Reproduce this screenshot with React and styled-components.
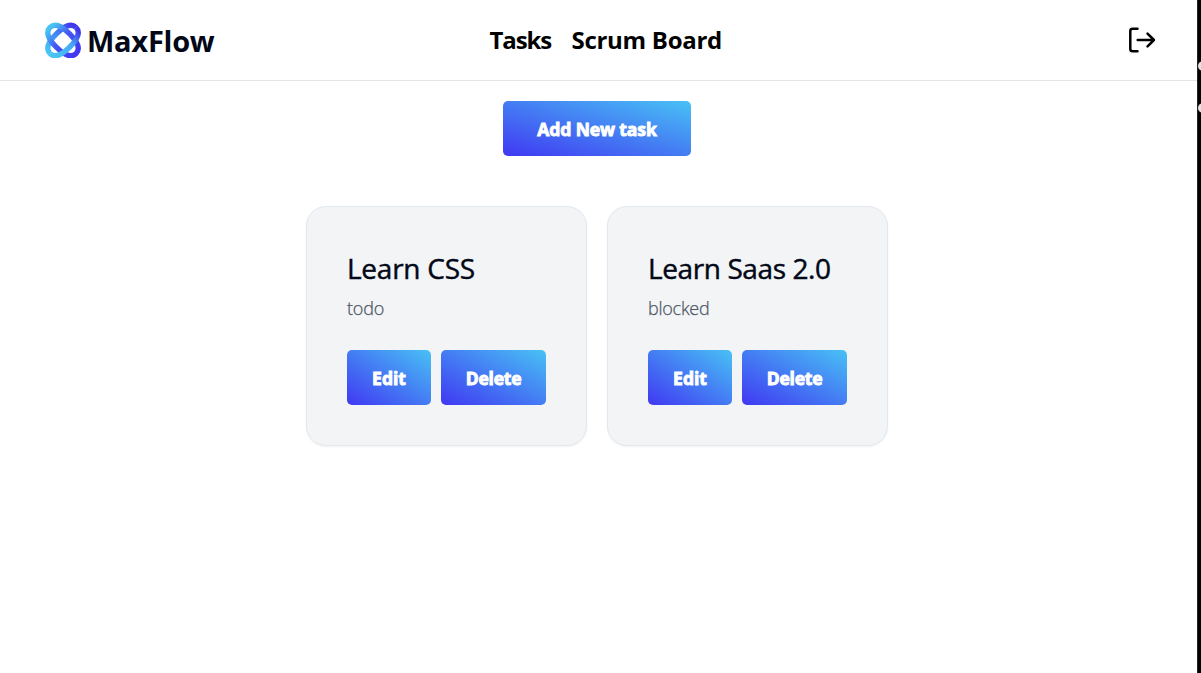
import React from "react";
import styled, { createGlobalStyle } from "styled-components";

const GlobalStyle = createGlobalStyle`
  * { box-sizing: border-box; }
  body { margin: 0; background: #fff; overflow: hidden; }
  h1, h2, p { margin: 0; font-weight: inherit; }
  button { border: 0; padding: 0; font: inherit; background: none; color: inherit; }
`;

const Page = styled.div`
  display: flex;
  height: 673px;
  font-family: "Segoe UI", "Open Sans", "Noto Sans", sans-serif;
  color: #020817;
`;

const Content = styled.div`
  flex: 1;
  display: flex;
  flex-direction: column;
`;

const Edge = styled.aside`
  flex: none;
  width: 4px;
  background: #000;
  border-left: 1px solid #222;
  overflow: hidden;
  display: flex;
  flex-direction: column;
  gap: 32px;
  padding-top: 61px;
`;

const EdgeDot = styled.span`
  flex: none;
  width: 10px;
  height: 10px;
  border-radius: 50%;
  background: #e4e4e4;
`;

const Header = styled.header`
  height: 81px;
  border-bottom: 1px solid #e5e5e5;
  display: grid;
  grid-template-columns: 1fr auto 1fr;
  align-items: center;
  padding: 0 41px 0 45px;
`;

const Brand = styled.div`
  display: flex;
  align-items: center;
  gap: 6px;
`;

const BrandName = styled.h1`
  font-size: 29px;
  line-height: 40px;
  font-weight: 700;
  letter-spacing: -0.25px;
  padding-top: 1px;
`;

const Nav = styled.nav`
  display: flex;
  gap: 20px;
  margin-left: 11px;
`;

const NavLink = styled.a`
  font-size: 24px;
  line-height: 36px;
  font-weight: 700;
  width: ${(p) => p.$width}px;
  letter-spacing: ${(p) => p.$spacing}px;
  color: #000;
  white-space: nowrap;
`;

const LogoutButton = styled.button`
  justify-self: end;
  display: flex;
`;

const Main = styled.main`
  display: flex;
  flex-direction: column;
  align-items: center;
  gap: 50px;
  padding: 20px 3px 0 0;
`;

const GradientButton = styled.button`
  width: ${(p) => p.$width}px;
  height: 55px;
  border-radius: 5px;
  background: linear-gradient(to top right, #4038f2, #48c1f5);
  color: #fff;
  font-size: 17.5px;
  font-weight: 700;
  letter-spacing: ${(p) => p.$spacing}px;
  -webkit-text-stroke: 0.9px currentColor;
  line-height: 55px;
  padding-top: 2px;
  white-space: nowrap;
  display: flex;
  align-items: center;
  justify-content: center;
`;

const CardList = styled.section`
  display: flex;
  gap: 20px;
`;

const Card = styled.article`
  width: 281px;
  height: 240px;
  padding: 40px;
  border: 1px solid #e2e8f0;
  border-radius: 20px;
  background: #f3f4f6;
  box-shadow: 0 1px 2px rgba(0, 0, 0, 0.05);
`;

const CardTitle = styled.h2`
  font-size: 28px;
  line-height: 42px;
  font-weight: 500;
  letter-spacing: ${(p) => p.$spacing}px;
  -webkit-text-stroke: 0.45px currentColor;
  white-space: nowrap;
`;

const CardStatus = styled.p`
  margin-top: 5px;
  font-size: 18px;
  line-height: 28px;
  font-weight: 300;
  letter-spacing: ${(p) => p.$spacing}px;
  -webkit-text-stroke: 0.25px currentColor;
  color: #4b5563;
`;

const Actions = styled.div`
  display: flex;
  gap: 10px;
  margin-top: 28px;
`;

function Logo() {
  return (
    <svg width="36" height="36" viewBox="-18 -18.5 36 36" fill="none" strokeWidth="5.3">
      <defs>
        <linearGradient id="back" x1="-18" y1="0" x2="18" y2="0" gradientUnits="userSpaceOnUse">
          <stop offset="0" stopColor="#46c5f3" />
          <stop offset="0.55" stopColor="#4480f4" />
          <stop offset="1" stopColor="#4035e9" />
        </linearGradient>
        <linearGradient id="falling" x1="-18" y1="0" x2="18" y2="0" gradientUnits="userSpaceOnUse">
          <stop offset="0" stopColor="#46c5f3" />
          <stop offset="0.45" stopColor="#4458f3" />
          <stop offset="1" stopColor="#4238f2" />
        </linearGradient>
        <linearGradient id="front" x1="-18" y1="0" x2="18" y2="0" gradientUnits="userSpaceOnUse">
          <stop offset="0" stopColor="#46c5f3" />
          <stop offset="0.6" stopColor="#46a8f4" />
          <stop offset="1" stopColor="#4035e9" />
        </linearGradient>
      </defs>
      <path transform="rotate(-45)" d="M-18.4 0C-18.4 -7.2 -10.5 -9.4 0 -9.4S18.4 -7.2 18.4 0" stroke="url(#back)" />
      <path
        transform="rotate(45)"
        d="M-18.4 0C-18.4 -7.2 -10.5 -9.4 0 -9.4S18.4 -7.2 18.4 0S10.5 9.4 0 9.4S-18.4 7.2 -18.4 0Z"
        stroke="url(#falling)"
      />
      <path transform="rotate(-45)" d="M-18.4 0C-18.4 7.2 -10.5 9.4 0 9.4S18.4 7.2 18.4 0" stroke="url(#front)" />
    </svg>
  );
}

function LogoutIcon() {
  return (
    <svg
      width="28"
      height="28"
      viewBox="0 0 28 28"
      fill="none"
      stroke="#000"
      strokeWidth="2.5"
      strokeLinecap="round"
      strokeLinejoin="round"
    >
      <path d="M9.5 2.7H4.7Q2.3 2.7 2.3 5V23Q2.3 25.3 4.7 25.3H9.5" />
      <path d="M9.7 14H26M19.5 7.7L26 14L19.5 20.3" />
    </svg>
  );
}

const tasks = [
  { title: "Learn CSS", status: "todo", titleSpacing: -0.25, statusSpacing: -0.2 },
  { title: "Learn Saas 2.0", status: "blocked", titleSpacing: -0.4, statusSpacing: -0.25 },
];

export default function App() {
  return (
    <Page>
      <GlobalStyle />
      <Content>
        <Header>
          <Brand>
            <Logo />
            <BrandName>MaxFlow</BrandName>
          </Brand>
          <Nav>
            <NavLink $width={62} $spacing={-1.1}>Tasks</NavLink>
            <NavLink $width={151} $spacing={-0.28}>Scrum Board</NavLink>
          </Nav>
          <LogoutButton aria-label="Log out">
            <LogoutIcon />
          </LogoutButton>
        </Header>
        <Main>
          <GradientButton $width={188} $spacing={-0.1}>Add New task</GradientButton>
          <CardList>
            {tasks.map((task) => (
              <Card key={task.title}>
                <CardTitle $spacing={task.titleSpacing}>{task.title}</CardTitle>
                <CardStatus $spacing={task.statusSpacing}>{task.status}</CardStatus>
                <Actions>
                  <GradientButton $width={84} $spacing={0}>Edit</GradientButton>
                  <GradientButton $width={105} $spacing={-0.2}>Delete</GradientButton>
                </Actions>
              </Card>
            ))}
          </CardList>
        </Main>
      </Content>
      <Edge>
        <EdgeDot />
        <EdgeDot />
      </Edge>
    </Page>
  );
}
